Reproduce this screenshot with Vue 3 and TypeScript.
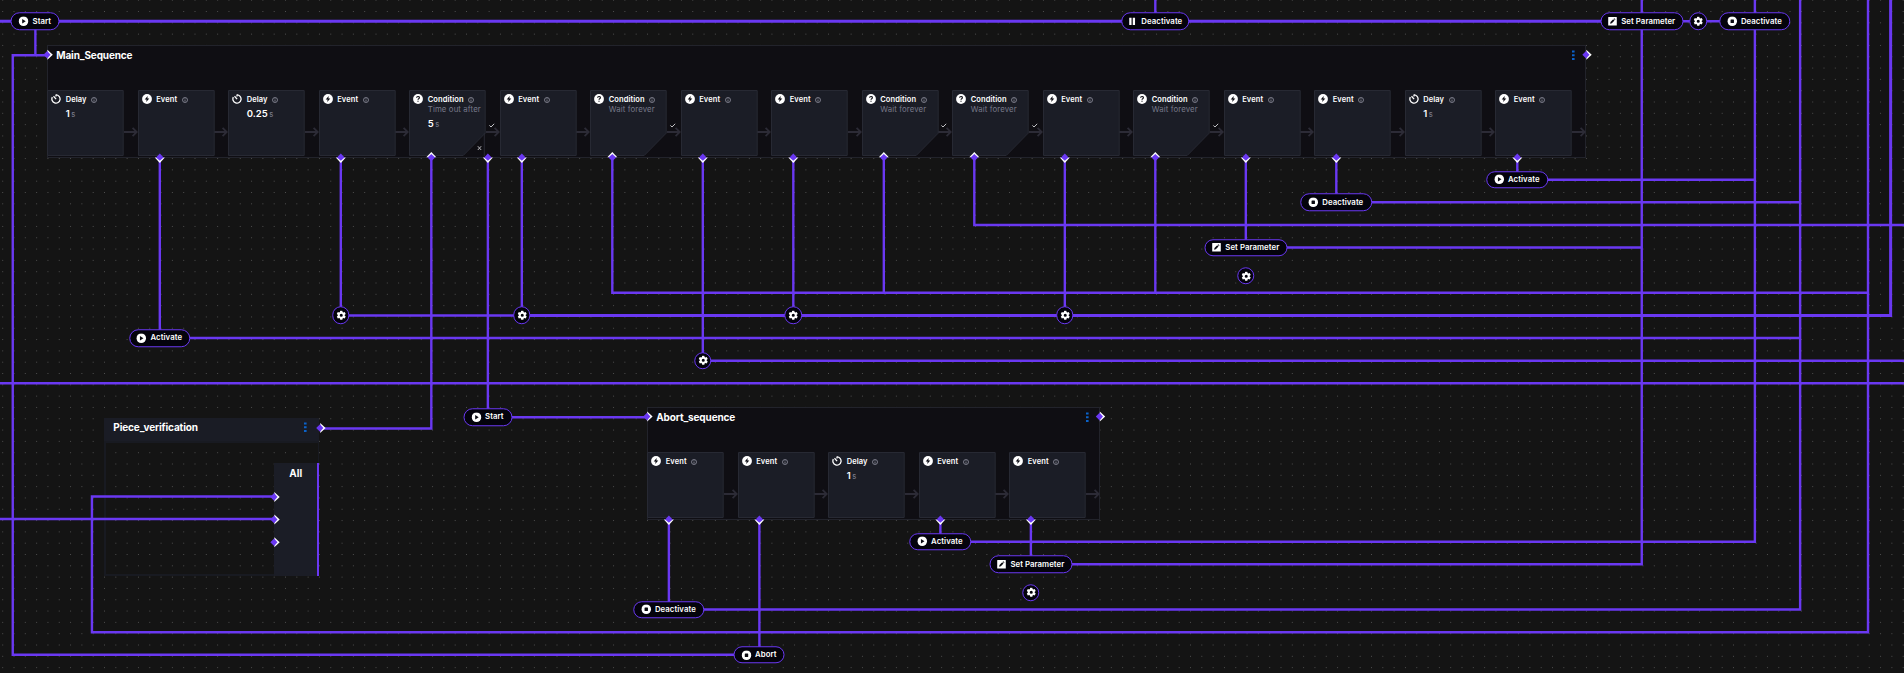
<script setup lang="ts">
type StepKind = 'delay' | 'event' | 'condition'
interface Step { kind: StepKind; note?: string; value?: string; timeout?: boolean }
interface Sequence { name: string; x: number; y: number; steps: Step[] }
type PillIcon = 'play' | 'stop' | 'pause' | 'edit'
interface Pill { label: string; icon: PillIcon; x: number; y: number; w: number }
interface Port { x: number; y: number; dir: number }

const UNIT = 11.3125
const X = (k: number): number => 12.75 + UNIT * k
const Y = (k: number): number => 21.3 + UNIT * k

const ev: Step = { kind: 'event' }
const wait: Step = { kind: 'condition', note: 'Wait forever' }
const names: Record<StepKind, string> = { delay: 'Delay', event: 'Event', condition: 'Condition' }

const sequences: Sequence[] = [
  {
    name: 'Main_Sequence', x: 47.25, y: 45,
    steps: [
      { kind: 'delay', value: '1' }, ev, { kind: 'delay', value: '0.25' }, ev,
      { kind: 'condition', note: 'Time out after', value: '5', timeout: true },
      ev, wait, ev, ev, wait, wait, ev, wait, ev, ev, { kind: 'delay', value: '1' }, ev,
    ],
  },
  { name: 'Abort_sequence', x: 647.25, y: 407, steps: [ev, ev, { kind: 'delay', value: '1' }, ev, ev] },
]

const wires: string[] = [
  `M${X(2)} ${Y(0)}V${Y(3)}`,
  `M${X(3)} ${Y(3)}H${X(0)}V${Y(56)}H${X(64)}`,
  `M1680 ${Y(0)}H1725`,
  `M${X(101)} 0V${Y(0)}`,
  `M${X(13)} 158V${Y(28)}H${X(158)}`,
  `M${X(29)} 158V${Y(26)}H${X(45)}`,
  `M${X(45)} 158V${Y(26)}`,
  `M${X(69)} 158V${Y(26)}`,
  `M${X(93)} 158V${Y(26)}`,
  `M${X(37)} 158V${Y(36)}H320`,
  `M${X(42)} 158V${Y(35)}H647`,
  `M${X(53)} 158V${Y(24)}H${X(164)}`,
  `M${X(77)} 158V${Y(24)}`,
  `M${X(101)} 158V${Y(24)}`,
  `M${X(61)} 158V${Y(30)}H1904`,
  `M${X(85)} 158V${Y(18)}H1904`,
  `M${X(109)} 158V${Y(20)}H${X(144)}`,
  `M${X(117)} 158V${Y(16)}H${X(158)}`,
  `M${X(133)} 158V${Y(14)}H${X(154)}`,
  `M0 ${Y(32)}H1904`,
  `M0 ${Y(44)}H274`,
  `M274 ${Y(42)}H${X(7)}V${Y(54)}H${X(164)}V0`,
  `M${X(58)} 520V${Y(52)}H${X(158)}V0`,
  `M${X(66)} 520V${Y(56)}`,
  `M${X(82)} 520V${Y(46)}H${X(154)}V0`,
  `M${X(90)} 520V${Y(48)}H${X(144)}V0`,
]
const heavyWires: string[] = [`M0 ${Y(0)}H1610`, `M${X(45)} ${Y(26)}H${X(166)}V0`]

const pills: Pill[] = [
  { label: 'Start', icon: 'play', x: X(2), y: Y(0), w: 49 },
  { label: 'Deactivate', icon: 'pause', x: X(101), y: Y(0), w: 67.5 },
  { label: 'Set Parameter', icon: 'edit', x: X(144), y: Y(0), w: 83 },
  { label: 'Deactivate', icon: 'stop', x: X(154), y: Y(0), w: 71.5 },
  { label: 'Activate', icon: 'play', x: X(133), y: Y(14), w: 61.5 },
  { label: 'Deactivate', icon: 'stop', x: X(117), y: Y(16), w: 71.5 },
  { label: 'Set Parameter', icon: 'edit', x: X(109), y: Y(20), w: 83 },
  { label: 'Activate', icon: 'play', x: X(13), y: Y(28), w: 61.5 },
  { label: 'Start', icon: 'play', x: X(42), y: Y(35), w: 49 },
  { label: 'Activate', icon: 'play', x: X(82), y: Y(46), w: 61.5 },
  { label: 'Set Parameter', icon: 'edit', x: X(90), y: Y(48), w: 83 },
  { label: 'Deactivate', icon: 'stop', x: X(58), y: Y(52), w: 71.5 },
  { label: 'Abort', icon: 'stop', x: X(66), y: Y(56), w: 51 },
]

const gears: [number, number][] = [
  [X(149), Y(0)], [X(109), Y(22.5)], [X(29), Y(26)], [X(45), Y(26)],
  [X(69), Y(26)], [X(93), Y(26)], [X(61), Y(30)], [X(90), Y(50.5)],
]

const ports: Port[] = [
  ...[13, 29, 42, 45, 61, 69, 93, 109, 117, 133].map((k) => ({ x: X(k), y: 157.6, dir: 90 })),
  ...[37, 53, 77, 85, 101].map((k) => ({ x: X(k), y: 157.3, dir: -90 })),
  ...[58, 66, 82, 90].map((k) => ({ x: X(k), y: 519.6, dir: 90 })),
  { x: 47.4, y: 54.7, dir: 0 }, { x: 1586.3, y: 54.7, dir: 0 },
  { x: 647.2, y: 416.6, dir: 0 }, { x: 1099.8, y: 416.6, dir: 0 },
  { x: 320.2, y: 428, dir: 0 },
  { x: 274.3, y: 496.9, dir: 0 }, { x: 274.3, y: 519.5, dir: 0 }, { x: 274.3, y: 542.2, dir: 0 },
]

const dotRows = Array.from({ length: 61 }, (_, i) => i * UNIT)
const place = (x: number, y: number) => ({ left: `${x}px`, top: `${y}px` })
</script>

<template>
  <main class="canvas">
    <svg class="layer" width="1904" height="673" viewBox="0 0 1904 673">
      <path v-for="(y, i) in dotRows" :key="i" :d="`M2.2 ${y + 0.2}H1904`" class="dots" />
    </svg>

    <section v-for="s in sequences" :key="s.name" class="sequence" :style="place(s.x, s.y)">
      <header class="seq-head">
        <h2 class="title">{{ s.name }}</h2>
        <svg class="more" width="3" height="11" viewBox="0 0 3 11"><path d="M0 .5h2.6v2H0zM0 4.3h2.6v2H0zM0 8.1h2.6v2H0z" /></svg>
      </header>
      <div class="steps">
        <div v-for="(st, i) in s.steps" :key="i" class="slot">
          <article class="card">
            <svg class="shape" width="77" height="66" viewBox="0 0 77 66">
              <path v-if="st.kind === 'condition'" d="M.5 .5H76.2V43.2L54.2 65.5H.5z" />
              <path v-else d="M.5 .5H76.2V65.5H.5z" />
              <path v-if="st.timeout" d="M75.3 43V66" />
              <path v-if="st.timeout" class="cross" d="M68.8 56.2l3.4 3.8M72.2 56.2l-3.4 3.8" />
            </svg>
            <svg class="badge" width="10" height="10" viewBox="0 0 10 10">
              <template v-if="st.kind === 'delay'">
                <path class="ring" d="M5 .9A4.1 4.1 0 1 1 1.35 3.1" />
                <path class="ring" d="M5 .6V2.4M2.5 2.2L5.1 5.1" />
              </template>
              <template v-else-if="st.kind === 'event'">
                <circle cx="5" cy="5" r="4.9" />
                <path class="ink" d="M5.7 1.9L2.7 5.4H4.6L4.2 8.1L7.3 4.6H5.4z" />
              </template>
              <template v-else>
                <circle cx="5" cy="5" r="4.9" />
                <path class="mark" d="M3.6 3.8C3.6 2 6.4 2 6.4 3.7C6.4 4.7 5 4.7 5 5.8M5 6.7V7.7" />
              </template>
            </svg>
            <div class="body">
              <div class="name">
                <span>{{ names[st.kind] }}</span>
                <svg width="6" height="6" viewBox="0 0 6 6"><circle cx="3" cy="3" r="2.5" /><path d="M3 1.4V2.1M3 2.6V4.6" /></svg>
              </div>
              <div v-if="st.note" class="note">{{ st.note }}</div>
              <div v-if="st.value" class="value">{{ st.value }}<small>s</small></div>
            </div>
          </article>
          <svg class="arrow" width="14" height="20" viewBox="0 0 14 20">
            <path v-if="st.kind === 'condition'" class="tick" d="M3.4 3.4L5 5L8.2 1.8" />
            <path d="M0 10H12.5M8.6 5.8L12.8 10L8.6 14.2" />
          </svg>
        </div>
      </div>
    </section>

    <section class="group">
      <header class="group-head">
        <h2 class="title">Piece_verification</h2>
        <svg class="more" width="3" height="11" viewBox="0 0 3 11"><path d="M0 .5h2.6v2H0zM0 4.3h2.6v2H0zM0 8.1h2.6v2H0z" /></svg>
      </header>
      <div class="group-body"><div class="all">All</div></div>
    </section>

    <svg class="layer" width="1904" height="673" viewBox="0 0 1904 673">
      <path v-for="d in wires" :key="d" :d="d" class="wire" />
      <path v-for="d in heavyWires" :key="d" :d="d" class="wire heavy" />
      <g v-for="(p, i) in ports" :key="i" :transform="`translate(${p.x} ${p.y}) rotate(${p.dir})`">
        <path class="port-edge" d="M0 -5L5.4 0L0 5z" />
        <path class="port" d="M-4 0L-.2 -3.8L3.2 0L-.2 3.8z" />
      </g>
    </svg>

    <div v-for="(p, i) in pills" :key="i" class="pill" :style="{ ...place(p.x, p.y), width: `${p.w}px` }">
      <svg width="10" height="10" viewBox="0 0 10 10">
        <template v-if="p.icon === 'play'"><circle cx="5" cy="5" r="4.8" /><path class="ink" d="M3.7 2.8L7.2 5L3.7 7.2z" /></template>
        <template v-else-if="p.icon === 'stop'"><circle cx="5" cy="5" r="4.8" /><rect class="ink" x="3.3" y="3.3" width="3.4" height="3.4" rx=".5" /></template>
        <path v-else-if="p.icon === 'pause'" d="M2 1.5h2.3V8.700H2zM5.500 1.500h2.300V8.700h-2.300z" />
        <template v-else><rect x=".7" y=".7" width="8.6" height="8.6" rx=".4" /><path class="ink" d="M2.600 7.500L3 5.700L5.700 3L7 4.300L4.300 7zM6.200 2.500L6.800 2L8 3.200L7.400 3.800z" /></template>
      </svg>
      <span class="label">{{ p.label }}</span>
    </div>

    <div v-for="([x, y], i) in gears" :key="i" class="gear" :style="place(x, y)">
      <svg width="10" height="10" viewBox="0 0 24 24">
        <path fill-rule="evenodd" d="M9.4 1h5.2l.6 3.2 1.9 1.1 3.1-1.1 2.6 4.5-2.5 2.1v2.3l2.5 2.1-2.6 4.5-3.1-1.1-1.9 1.1-.6 3.3H9.4l-.6-3.3-1.9-1.1-3.1 1.1-2.6-4.5 2.5-2.1v-2.3L1.2 8.700l2.600-4.500 3.100 1.100 1.900-1.100zM12 8.300a3.700 3.700 0 1 0 0 7.400a3.700 3.700 0 0 0 0-7.400z" />
      </svg>
    </div>
  </main>
</template>

<style>
html, body { margin: 0; overflow: hidden; background: #141414; }
</style>

<style scoped>
.canvas {
  position: relative;
  width: 1904px;
  height: 673px;
  overflow: hidden;
  background: #141414;
  color: #fff;
  font-family: Inter, "Open Sans", sans-serif;
}
.layer { position: absolute; left: 0; top: 0; display: block; }
.dots { stroke: #4e4e4e; stroke-width: 1; stroke-dasharray: 1 10.3125; }
.wire { fill: none; stroke: #6a38f2; stroke-width: 2.4; }
.heavy { stroke-width: 3; }
.port-edge { fill: #fff; }
.port { fill: #6a38f2; }

.sequence {
  position: absolute;
  box-sizing: border-box;
  height: 112.5px;
  padding-top: 1px;
  background: #0f0e13;
  box-shadow: inset 0 0 0 1px #22232b;
}
.seq-head { display: flex; justify-content: space-between; box-sizing: border-box; height: 44px; padding: 2.5px 10.5px 0 9px; }
.title { margin: 0; font-size: 10px; line-height: 13px; font-weight: 700; letter-spacing: -0.13px; }
.more { display: block; fill: #0b62c9; margin-top: 1px; }
.steps { display: flex; }
.slot { display: flex; width: 90.5px; height: 66px; }
.card { position: relative; display: flex; gap: 4.5px; box-sizing: border-box; width: 76.7px; height: 66px; padding: 4px 0 0 4px; }
.shape { position: absolute; left: 0; top: 0; fill: #1b1d26; stroke: #272933; stroke-width: 1; }
.shape .cross { stroke: #b8b8bd; }
.badge { position: relative; flex: none; fill: #fff; }
.ring { fill: none; stroke: #fff; stroke-width: 1.3; }
.ink { fill: #0b0b12; }
.mark { fill: none; stroke: #0b0b12; stroke-width: 1.1; }
.body { position: relative; white-space: nowrap; }
.name { display: flex; align-items: center; gap: 4.5px; height: 11px; font-size: 7.5px; line-height: 11px; font-weight: 600; letter-spacing: 0.08px; }
.name svg { fill: none; stroke: #9092a0; stroke-width: .8; }
.note { font-size: 7.8px; line-height: 9px; letter-spacing: 0.12px; color: #777989; }
.value { margin-top: 2.5px; font-size: 9.5px; line-height: 12px; font-weight: 600; }
.note + .value { margin-top: 4px; }
.value small { margin-left: 1.5px; font-size: 7.5px; font-weight: 500; color: #777989; }
.arrow { display: block; margin-top: 32px; fill: none; stroke: #2c2b36; stroke-width: 1.8; }
.arrow .tick { stroke: #c4c4c8; stroke-width: 1; }

.group { position: absolute; left: 104.3px; top: 418px; width: 215px; }
.group-head { display: flex; justify-content: space-between; box-sizing: border-box; height: 22.5px; padding: 3px 12px 0 9px; background: #1a1c25; }
.group-body { display: flex; justify-content: flex-end; align-items: flex-end; box-sizing: border-box; height: 135.5px; border: 2px solid #181a21; border-right-width: 1px; }
.all {
  box-sizing: border-box;
  width: 45.2px;
  height: 113px;
  margin: 0 -1px -2px 0;
  padding: 4px 0 0;
  background: #1b1d26;
  border-right: 2px solid #6a38f2;
  font-size: 10px;
  line-height: 13px;
  font-weight: 700;
  text-align: center;
}

.pill, .gear {
  position: absolute;
  display: flex;
  align-items: center;
  justify-content: center;
  box-sizing: border-box;
  height: 17.5px;
  transform: translate(-50%, -50%);
  background: #04030c;
  border: 1px solid #6a38f2;
  border-radius: 9px;
}
.pill { gap: 4px; padding-right: 1px; }
.pill svg, .gear svg { flex: none; fill: #fff; }
.label { margin-top: -1px; white-space: nowrap; font-size: 7.8px; line-height: 12px; font-weight: 600; letter-spacing: 0.05px; }
.gear { width: 17.5px; }
</style>
